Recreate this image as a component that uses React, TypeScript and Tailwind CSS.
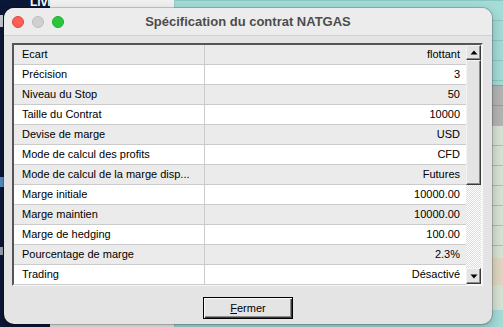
import React from "react";

const rows: [string, string][] = [
  ["Ecart", "flottant"],
  ["Précision", "3"],
  ["Niveau du Stop", "50"],
  ["Taille du Contrat", "10000"],
  ["Devise de marge", "USD"],
  ["Mode de calcul des profits", "CFD"],
  ["Mode de calcul de la marge disp...", "Futures"],
  ["Marge initiale", "10000.00"],
  ["Marge maintien", "10000.00"],
  ["Marge de hedging", "100.00"],
  ["Pourcentage de marge", "2.3%"],
  ["Trading", "Désactivé"],
];

const raised =
  "bg-[#e4e4e4] border border-t-[#f4f4f4] border-l-[#f4f4f4] border-r-[#3a3a3a] border-b-[#3a3a3a] shadow-[inset_-1px_-1px_0_#8a8a8a]";

function Arrow({ up }: { up?: boolean }) {
  return (
    <svg width="8" height="5" viewBox="0 0 8 5">
      {up ? <path d="M0.5 4.5 L4 0.5 L7.5 4.5 Z" fill="#000" /> : <path d="M0.5 0.5 L4 4.5 L7.5 0.5 Z" fill="#000" />}
    </svg>
  );
}

export default function App() {
  return (
    <div className="relative w-[503px] h-[327px] overflow-hidden font-['Liberation_Sans',sans-serif]">
      {/* desktop background */}
      <div className="flex h-full w-full">
        <div className="relative w-[50px] h-full bg-[#0b1736] flex flex-col">
          <div className="pl-[30px] -mt-[5px] text-white font-bold text-[12px] leading-[14px]">Livi</div>
          <div className="ml-0 mt-[6px] w-[3px] h-[12px] bg-[#c8ccd8]" />
          <div className="mt-[150px] w-[4px] h-[10px] bg-[#5b8fc7]" />
          <div className="mt-[60px] w-[3px] h-[8px] bg-[#9aa4b8]" />
        </div>
        <div className="w-[125px] h-full bg-[#f1f1f1] border-r border-[#9cc]" />
        <div className="flex-1 h-full flex flex-col">
          <div className="h-[85px] bg-[#a4dcd7] bg-[linear-gradient(#8cc6c1_1px,transparent_1px)] bg-[length:100%_20px]" />
          <div className="h-[40px] bg-[#b4b4b4] bg-[linear-gradient(#9c9c9c_1px,transparent_1px)] bg-[length:100%_20px]" />
          <div className="h-[133px] bg-[#d6e3d6] bg-[linear-gradient(#aebfae_1px,transparent_1px)] bg-[length:100%_20px]" />
          <div className="h-[27px] bg-[#e0d6c2]" />
          <div className="h-[25px] bg-[#d6e3d6]" />
          <div className="flex-1 bg-[#a4dcd7]" />
        </div>
      </div>

      {/* window */}
      <div className="absolute left-[4px] top-[8px] w-[488px] h-[316px] rounded-[10px] bg-[#e4e4e4] overflow-hidden shadow-[0_0_0_1px_rgba(0,0,0,0.18),0_4px_12px_rgba(0,0,0,0.25)] flex flex-col">
        <div className="relative h-[28px] bg-[#ececec] border-b border-[#d2d2d2] flex items-center pl-[8px] gap-[8px]">
          <div className="w-[12px] h-[12px] rounded-full bg-[#fe5f57] border border-[#e0443e]" />
          <div className="w-[12px] h-[12px] rounded-full bg-[#d0d0d3] border border-[#bdbdc0]" />
          <div className="w-[12px] h-[12px] rounded-full bg-[#29c740] border border-[#1dad2b]" />
          <div className="absolute inset-0 flex items-center justify-center text-[13px] font-bold text-[#4c4c4c] pointer-events-none">
            Spécification du contrat NATGAS
          </div>
        </div>

        <div className="flex flex-col items-stretch px-[8px] pt-[7px]">
          <div className="w-[471px] h-[243px] border-2 border-t-[#555] border-l-[#555] border-r-[#f6f6f6] border-b-[#f6f6f6] flex bg-white">
            <div className="w-[452px] flex flex-col">
              {rows.map(([k, v], i) => (
                <div
                  key={k}
                  className={`h-[20px] flex border-b border-[#cbcbcb] text-[11px] text-black leading-[19px] ${
                    i % 2 === 0 ? "bg-[#ebebeb]" : "bg-white"
                  }`}
                >
                  <div className="w-[191px] pl-[8px] border-r border-[#cbcbcb] whitespace-nowrap overflow-hidden">{k}</div>
                  <div className="flex-1 pr-[6px] text-right whitespace-nowrap">{v}</div>
                </div>
              ))}
            </div>
            <div className="w-[15px] flex flex-col">
              <div className={`h-[15px] flex items-center justify-center ${raised}`}>
                <Arrow up />
              </div>
              <div className={`h-[125px] ${raised}`} />
              <div className="flex-1 bg-[repeating-conic-gradient(#ffffff_0_25%,#dcdcdc_0_50%)] bg-[length:2px_2px]" />
              <div className={`h-[16px] flex items-center justify-center ${raised}`}>
                <Arrow />
              </div>
            </div>
          </div>

          <div className="flex justify-center pt-[11px]">
            <button className="w-[90px] h-[22px] bg-[#e4e4e4] border border-black shadow-[inset_1px_1px_0_#fafafa,inset_-1px_-1px_0_#3a3a3a,inset_-2px_-2px_0_#8a8a8a] text-[11px] text-black leading-none">
              <span className="underline">F</span>ermer
            </button>
          </div>
        </div>
      </div>
    </div>
  );
}
